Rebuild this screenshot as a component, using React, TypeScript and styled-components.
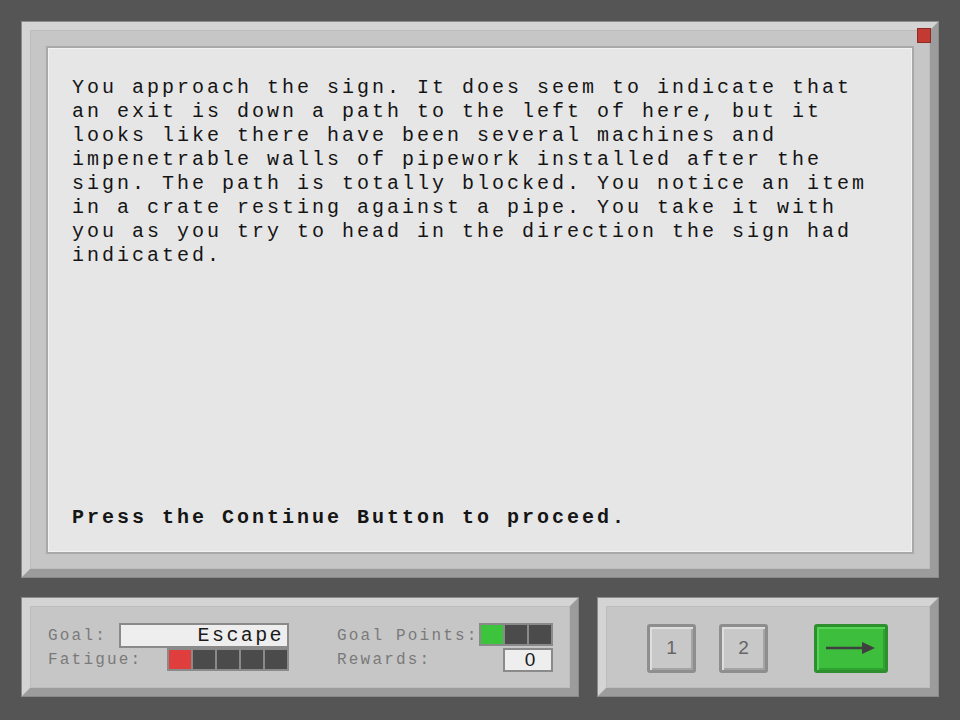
import React from "react";
import styled, { createGlobalStyle } from "styled-components";

const MONO = `"Courier New", "Nimbus Mono PS", "Nimbus Mono L", FreeMono, Courier, "Liberation Mono", monospace`;

const Global = createGlobalStyle`
  html, body { margin: 0; padding: 0; background: #555555; }
  body { width: 960px; height: 720px; overflow: hidden; font-family: ${MONO}; }
`;

const Screen = styled.div`
  box-sizing: border-box;
  width: 960px;
  height: 720px;
  padding: 22px 22px 24px 22px;
  display: flex;
  flex-direction: column;
  gap: 21px;
`;

const Panel = styled.div<{ $w?: number; $h: number }>`
  position: relative;
  box-sizing: border-box;
  ${(p) => (p.$w ? `width: ${p.$w}px;` : "")}
  height: ${(p) => p.$h}px;
  background: #c6c6c6;
  border-style: solid;
  border-width: 8px;
  border-color: #d4d4d4 #9c9c9c #9c9c9c #d4d4d4;
  box-shadow: inset 0 0 0 1px #bdbdbd, 0 0 0 1px #8a8a8a;
`;

const MainPanel = styled(Panel)`
  padding: 16px 16px 15px 16px;
  display: flex;
`;

const CloseDot = styled.div`
  position: absolute;
  top: -2px;
  right: -1px;
  width: 12px;
  height: 13px;
  background: #c23a32;
  border: 1px solid #8e2a24;
`;

const Story = styled.div`
  flex: 1;
  box-sizing: border-box;
  background: #e6e6e6;
  border: 2px solid #a9a9a9;
  box-shadow: inset 0 0 0 1px #f2f2f2;
  padding: 28px 22px 22px 24px;
  display: flex;
  flex-direction: column;
  color: #151515;
  font-family: ${MONO};
  font-size: 20px;
  line-height: 24px;
  letter-spacing: 3px;
`;

const StoryText = styled.p`
  margin: 0;
`;

const Prompt = styled.p`
  margin: auto 0 0 0;
  font-weight: bold;
`;

const BottomRow = styled.div`
  display: flex;
  gap: 20px;
`;

const StatsPanel = styled(Panel)`
  display: flex;
  align-items: center;
  padding: 0 0 0 18px;
  gap: 48px;
`;

const StatGroup = styled.div<{ $labelW: number; $valueW: number }>`
  display: grid;
  grid-template-columns: ${(p) => p.$labelW}px ${(p) => p.$valueW}px;
  grid-template-rows: 25px 24px;
  align-items: center;
  margin-top: 1px;
`;

const Label = styled.span`
  color: #7a7a7a;
  font-size: 16px;
  letter-spacing: 2.2px;
  white-space: nowrap;
`;

const Field = styled.div<{ $w: number }>`
  box-sizing: border-box;
  justify-self: end;
  align-self: start;
  width: ${(p) => p.$w}px;
  height: 25px;
  background: #eeeeee;
  border: 2px solid #8a8a8a;
  color: #1a1a1a;
  font-size: 20px;
  line-height: 22px;
  letter-spacing: 2.4px;
  text-align: right;
  padding-right: 3px;
`;

const Meter = styled.div`
  justify-self: end;
  align-self: start;
  display: flex;
  gap: 2px;
  padding: 2px;
  background: #8a8a8a;
`;

const Cell = styled.div<{ $fill?: string }>`
  width: 22px;
  height: 19px;
  background: ${(p) => p.$fill ?? "#4b4b4b"};
`;

const Counter = styled(Field)`
  height: 24px;
  line-height: 20px;
  font-family: "Liberation Sans", Arial, sans-serif;
  font-size: 19px;
  letter-spacing: 0;
  text-align: center;
  padding: 0 0 0 4px;
`;

const ControlPanel = styled(Panel)`
  display: flex;
  align-items: center;
  padding: 2px 0 0 41px;
`;

const KeyButton = styled.button<{ $ml?: number }>`
  box-sizing: border-box;
  width: 49px;
  height: 49px;
  margin-left: ${(p) => p.$ml ?? 0}px;
  padding: 0;
  background: #c8c8c8;
  border: 3px solid #8e8e8e;
  border-radius: 3px;
  box-shadow: inset 2px 2px 0 #dedede, inset -2px -2px 0 #a4a4a4;
  color: #666666;
  font-family: "Liberation Sans", Arial, sans-serif;
  font-size: 19px;
  display: flex;
  align-items: center;
  justify-content: center;
`;

const GoButton = styled(KeyButton)`
  width: 74px;
  background: #3dbf3d;
  border-color: #2e8f2e;
  box-shadow: inset 2px 2px 0 #55d455, inset -2px -2px 0 #2fa22f;
`;

const Arrow = () => (
  <svg width="54" height="14" viewBox="0 0 54 14">
    <line x1="2" y1="7" x2="40" y2="7" stroke="#3f3f3f" strokeWidth="2.4" />
    <polygon points="38,1 51,7 38,13" fill="#3f3f3f" />
  </svg>
);

export default function App() {
  return (
    <>
      <Global />
      <Screen>
        <MainPanel $h={555}>
          <CloseDot />
          <Story>
            <StoryText>
              You approach the sign. It does seem to indicate that an exit is
              down a path to the left of here, but it looks like there have
              been several machines and impenetrable walls of pipework
              installed after the sign. The path is totally blocked. You notice
              an item in a crate resting against a pipe. You take it with you
              as you try to head in the direction the sign had indicated.
            </StoryText>
            <Prompt>Press the Continue Button to proceed.</Prompt>
          </Story>
        </MainPanel>
        <BottomRow>
          <StatsPanel $w={556} $h={98}>
            <StatGroup $labelW={71} $valueW={170}>
              <Label>Goal:</Label>
              <Field $w={170}>Escape</Field>
              <Label>Fatigue:</Label>
              <Meter>
                <Cell $fill="#e03d3d" />
                <Cell />
                <Cell />
                <Cell />
                <Cell />
              </Meter>
            </StatGroup>
            <StatGroup $labelW={142} $valueW={74}>
              <Label>Goal Points:</Label>
              <Meter>
                <Cell $fill="#3cc43c" />
                <Cell />
                <Cell />
              </Meter>
              <Label>Rewards:</Label>
              <Counter $w={50}>0</Counter>
            </StatGroup>
          </StatsPanel>
          <ControlPanel $w={340} $h={98}>
            <KeyButton>1</KeyButton>
            <KeyButton $ml={23}>2</KeyButton>
            <GoButton $ml={46} aria-label="Continue">
              <Arrow />
            </GoButton>
          </ControlPanel>
        </BottomRow>
      </Screen>
    </>
  );
}
